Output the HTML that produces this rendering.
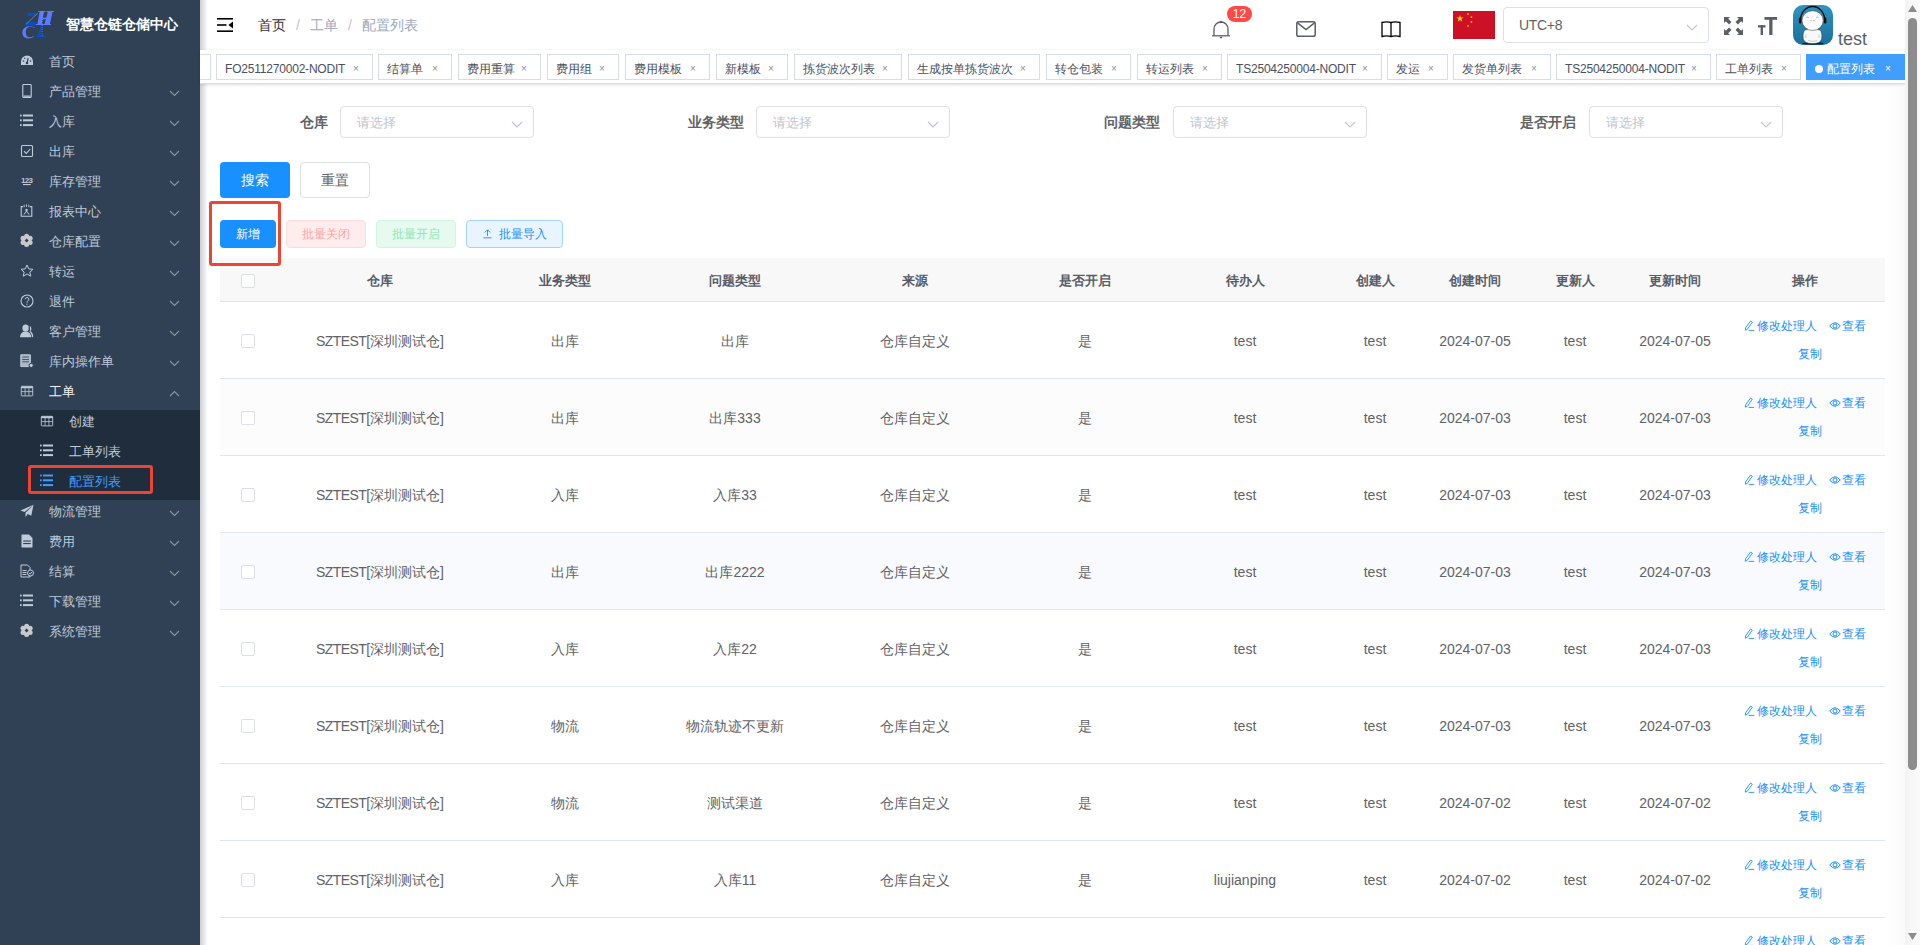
<!DOCTYPE html><html><head><meta charset="utf-8"><title>配置列表</title><style>
*{box-sizing:border-box;margin:0;padding:0}
html,body{width:1920px;height:945px;overflow:hidden;background:#fff}
body{position:relative;font-family:"Liberation Sans",sans-serif;color:#606266;font-size:14px}
.abs{position:absolute}
.sb{position:absolute;left:0;top:0;width:200px;height:945px;background:#304156}
.mi{position:absolute;left:0;width:200px;height:30px;color:#bfcbd9;font-size:13px;white-space:nowrap}
.mi .t{position:absolute;left:49px;top:0;line-height:24px}
.mi .ic{position:absolute;left:20px;top:4px;width:14px;height:14px}
.mi .ar{position:absolute;left:169px;top:10px;width:11px;height:7px}
.sub .t{left:69px}
.sub .ic{left:40px}
.tag{position:absolute;top:4px;height:26px;border:1px solid #d8dce5;background:#fff;color:#495060;font-size:12px;line-height:28px;padding-left:8px;white-space:nowrap}
.tag .x{position:absolute;top:0;font-size:10px;color:#8a8f99}
.lbl{position:absolute;top:106px;height:32px;line-height:32px;font-weight:bold;color:#606266;font-size:14px;text-align:right;white-space:nowrap}
.sel{position:absolute;top:106px;width:194px;height:32px;border:1px solid #dcdfe6;border-radius:4px;background:#fff}
.sel .ph{position:absolute;left:16px;top:0;line-height:32px;color:#c0c4cc;font-size:13px}
.sel svg{position:absolute;right:10px;top:14px}
.btn{position:absolute;border-radius:4px;text-align:center;white-space:nowrap}
.th{position:absolute;top:258px;height:44px;line-height:46px;font-weight:bold;color:#555c68;font-size:13px;text-align:center}
.td{position:absolute;height:77px;line-height:79px;color:#606266;font-size:14px;text-align:center;white-space:nowrap}
.cb{position:absolute;width:14px;height:14px;border:1px solid #dcdfe6;border-radius:2px;background:#fff}
.op{position:absolute;color:#1890ff;font-size:12px;white-space:nowrap}
</style></head><body>
<div class="sb">
<svg class="abs" style="left:0;top:0" width="60" height="45" viewBox="0 0 60 45">
<g fill="#5b7cff"><path d="M39.7 11.6h4.4l-2.4 12.9h-4.4z"/><path d="M47.9 11.6h4.7l-2.8 12.9h-5.3z"/><path d="M38.3 11h7.2v1.1h-7.2zM46.6 11h7.4v1.1h-7.4zM35.8 23.9h7.4v1.1h-7.4zM43.3 23.9h7.6v1.1h-7.6z"/><path d="M42.8 17.7h6.3l-.3 1.6h-6.3z"/>
<path d="M34.8 27.6C32 25.3 22.4 25 22.4 32.8C22.4 38.8 29 40 34.2 36.5L33.8 36C30 38.3 25.9 37.8 25.8 32.5C25.7 26.4 31 25.8 34.5 28.1z"/></g>
<g fill="#0a4fc0"><path d="M27.3 13.4C30 12.2 34.5 13.6 37.6 12.8L36.8 15.2C34 16.2 30.5 15.5 27.8 16.6z"/><path d="M25.6 22.4C28.5 21.6 32.5 22.6 35.5 21.7L35.7 24.9H25.6z"/>
<path d="M40.9 25h2.3l-2.9 11.2h-2.5z"/><path d="M35.8 35.8h9.2l1-2 -.3 3.2H35.7z"/></g>
<path d="M37.7 13.2L25.8 24.5" stroke="#7a9ad0" stroke-width=".7"/>
<path d="M42.2 11v26" stroke="#8aa0c8" stroke-width=".5" stroke-dasharray="1 1"/>
</svg>
<div class="abs" style="left:66px;top:15px;line-height:18px;font-size:14px;font-weight:bold;color:#fff;white-space:nowrap">智慧仓链仓储中心</div>
<div class="abs" style="left:0;top:410px;width:200px;height:90px;background:#1f2d3d"></div>
<div class="mi" style="top:50px"><svg class="ic" viewBox="0 0 14 14"><path d="M7 1.5A6 6 0 0 0 1 7.5v3.5h12V7.5A6 6 0 0 0 7 1.5z" fill="#bfcbd9"/><circle cx="7" cy="9" r="1.3" fill="#304156"/><path d="M7 9L8.2 4.2" stroke="#304156" stroke-width="1.2"/><circle cx="3.5" cy="7" r=".8" fill="#304156"/><circle cx="10.5" cy="7" r=".8" fill="#304156"/><circle cx="4.8" cy="4.3" r=".7" fill="#304156"/></svg><span class="t">首页</span>
</div>
<div class="mi" style="top:80px"><svg class="ic" viewBox="0 0 14 14"><rect x="2.8" y=".5" width="8.4" height="13" rx="1" fill="none" stroke="#bfcbd9" stroke-width="1.1"/><rect x="3.5" y="11.5" width="7" height="1.3" fill="#bfcbd9"/></svg><span class="t">产品管理</span>
<svg class="ar" viewBox="0 0 11 7"><path d="M1 1l4.5 4.5L10 1" fill="none" stroke="#909399" stroke-width="1.1"/></svg>
</div>
<div class="mi" style="top:110px"><svg class="ic" viewBox="0 0 14 14"><g fill="#bfcbd9"><rect x="0" y="0.6" width="1.7" height="1.8"/><rect x="3" y="0.5" width="10" height="2"/><rect x="0" y="5.4" width="1.7" height="1.8"/><rect x="3" y="5.3" width="10" height="2"/><rect x="0" y="10.2" width="1.7" height="1.8"/><rect x="3" y="10.1" width="10" height="2"/></g></svg><span class="t">入库</span>
<svg class="ar" viewBox="0 0 11 7"><path d="M1 1l4.5 4.5L10 1" fill="none" stroke="#909399" stroke-width="1.1"/></svg>
</div>
<div class="mi" style="top:140px"><svg class="ic" viewBox="0 0 14 14"><rect x="1.5" y="1.5" width="11" height="11" rx="1" fill="none" stroke="#bfcbd9" stroke-width="1.1"/><path d="M4 7.2l2.2 2.2L10.3 5" fill="none" stroke="#bfcbd9" stroke-width="1.1"/></svg><span class="t">出库</span>
<svg class="ar" viewBox="0 0 11 7"><path d="M1 1l4.5 4.5L10 1" fill="none" stroke="#909399" stroke-width="1.1"/></svg>
</div>
<div class="mi" style="top:170px"><svg class="ic" viewBox="0 0 14 14"><text x="6.7" y="8.6" text-anchor="middle" font-size="8" font-weight="bold" font-family="Liberation Sans" letter-spacing="-.6" fill="#bfcbd9">123</text><rect x="3" y="10" width="7.7" height="1.1" fill="#bfcbd9"/></svg><span class="t">库存管理</span>
<svg class="ar" viewBox="0 0 11 7"><path d="M1 1l4.5 4.5L10 1" fill="none" stroke="#909399" stroke-width="1.1"/></svg>
</div>
<div class="mi" style="top:200px"><svg class="ic" viewBox="0 0 14 14"><path d="M3.2 2.6H1.2v9.6h10.6V2.6h-2" fill="none" stroke="#bfcbd9" stroke-width="1.1"/><path d="M4.2 .6v2.6M6.5 .3v2.6M8.8 .6v2.6" stroke="#bfcbd9" stroke-width=".9"/><circle cx="6.5" cy="6" r="1.2" fill="#bfcbd9"/><path d="M3.9 10.6L6.5 7l2.6 3.6" fill="none" stroke="#bfcbd9" stroke-width="1"/></svg><span class="t">报表中心</span>
<svg class="ar" viewBox="0 0 11 7"><path d="M1 1l4.5 4.5L10 1" fill="none" stroke="#909399" stroke-width="1.1"/></svg>
</div>
<div class="mi" style="top:230px"><svg class="ic" style="overflow:visible" viewBox="0 0 14 14"><g fill="#c8c9cc"><circle cx="10.15" cy="8.45" r="2.5"/><circle cx="6.60" cy="10.50" r="2.5"/><circle cx="3.05" cy="8.45" r="2.5"/><circle cx="3.05" cy="4.35" r="2.5"/><circle cx="6.60" cy="2.30" r="2.5"/><circle cx="10.15" cy="4.35" r="2.5"/><circle cx="6.6" cy="6.4" r="4.4"/></g><path d="M6.6 4.4l2 2-2 2-2-2z" fill="#304156"/></svg><span class="t">仓库配置</span>
<svg class="ar" viewBox="0 0 11 7"><path d="M1 1l4.5 4.5L10 1" fill="none" stroke="#909399" stroke-width="1.1"/></svg>
</div>
<div class="mi" style="top:260px"><svg class="ic" viewBox="0 0 14 14"><path d="M7 1l1.8 3.9 4.2.4-3.2 2.8 1 4.1L7 10 3.2 12.2l1-4.1L1 5.3l4.2-.4z" fill="none" stroke="#bfcbd9" stroke-width="1"/></svg><span class="t">转运</span>
<svg class="ar" viewBox="0 0 11 7"><path d="M1 1l4.5 4.5L10 1" fill="none" stroke="#909399" stroke-width="1.1"/></svg>
</div>
<div class="mi" style="top:290px"><svg class="ic" viewBox="0 0 14 14"><circle cx="7" cy="7" r="6" fill="none" stroke="#bfcbd9" stroke-width="1.1"/><path d="M5.3 5.3a1.8 1.8 0 1 1 2.4 1.7c-.5.2-.7.5-.7 1v.6" fill="none" stroke="#bfcbd9" stroke-width="1"/><circle cx="7" cy="10.2" r=".6" fill="#bfcbd9"/></svg><span class="t">退件</span>
<svg class="ar" viewBox="0 0 11 7"><path d="M1 1l4.5 4.5L10 1" fill="none" stroke="#909399" stroke-width="1.1"/></svg>
</div>
<div class="mi" style="top:320px"><svg class="ic" viewBox="0 0 14 14"><path d="M9.6 1.8a3 3.3 0 0 1 .9 5.4c1.6.9 2.6 2.6 2.8 5.3l-1.3 1C11.7 10 10.6 8.4 9 7.6c1-1.3 1.3-3.7.6-5.8z" fill="#bfcbd9"/><ellipse cx="5.6" cy="4" rx="3.2" ry="3.5" fill="#bfcbd9"/><path d="M0 13.3C.2 9.6 2.4 7.6 5.6 7.6s5.4 2 5.6 5.7z" fill="#bfcbd9"/><path d="M9 3.6a3.6 3.9 0 0 1 -.2 4.8" fill="none" stroke="#304156" stroke-width=".8"/></svg><span class="t">客户管理</span>
<svg class="ar" viewBox="0 0 11 7"><path d="M1 1l4.5 4.5L10 1" fill="none" stroke="#909399" stroke-width="1.1"/></svg>
</div>
<div class="mi" style="top:350px"><svg class="ic" viewBox="0 0 14 14"><path d="M.8 .8h9.6v8.4M8.6 12.6H.8V.8" fill="none" stroke="#bfcbd9" stroke-width="1"/><rect x=".8" y=".8" width="9.6" height="11.8" fill="#bfcbd9" opacity=".85"/><g fill="#304156"><rect x="2.2" y="2.6" width="6.8" height=".8"/><rect x="2.2" y="5" width="6.8" height=".8"/><rect x="2.2" y="7.4" width="6.8" height=".8"/></g><circle cx="11.2" cy="11.4" r="2.1" fill="#bfcbd9" stroke="#304156" stroke-width="1"/></svg><span class="t">库内操作单</span>
<svg class="ar" viewBox="0 0 11 7"><path d="M1 1l4.5 4.5L10 1" fill="none" stroke="#909399" stroke-width="1.1"/></svg>
</div>
<div class="mi" style="top:380px"><svg class="ic" viewBox="0 0 14 14"><rect x="1.3" y="2.3" width="11.4" height="9.6" rx=".6" fill="none" stroke="#bfcbd9" stroke-width=".9"/><rect x="1.3" y="2.3" width="11.4" height="1.9" fill="#bfcbd9"/><path d="M1.3 7.6h11.4M5.1 4v7.8M8.9 4v7.8" stroke="#bfcbd9" stroke-width=".8"/></svg><span class="t" style="color:#f4f4f5">工单</span>
<svg class="ar" viewBox="0 0 11 7"><path d="M1 6L5.5 1.5 10 6" fill="none" stroke="#909399" stroke-width="1.1"/></svg>
</div>
<div class="mi sub" style="top:410px"><svg class="ic" viewBox="0 0 14 14"><rect x="1.3" y="2.3" width="11.4" height="9.6" rx=".6" fill="none" stroke="#bfcbd9" stroke-width=".9"/><rect x="1.3" y="2.3" width="11.4" height="1.9" fill="#bfcbd9"/><path d="M1.3 7.6h11.4M5.1 4v7.8M8.9 4v7.8" stroke="#bfcbd9" stroke-width=".8"/></svg><span class="t">创建</span>
</div>
<div class="mi sub" style="top:440px"><svg class="ic" viewBox="0 0 14 14"><g fill="#bfcbd9"><rect x="0" y="0.6" width="1.7" height="1.8"/><rect x="3" y="0.5" width="10" height="2"/><rect x="0" y="5.4" width="1.7" height="1.8"/><rect x="3" y="5.3" width="10" height="2"/><rect x="0" y="10.2" width="1.7" height="1.8"/><rect x="3" y="10.1" width="10" height="2"/></g></svg><span class="t">工单列表</span>
</div>
<div class="mi sub" style="top:470px"><svg class="ic" viewBox="0 0 14 14"><g fill="#409eff"><rect x="0" y="0.6" width="1.7" height="1.8"/><rect x="3" y="0.5" width="10" height="2"/><rect x="0" y="5.4" width="1.7" height="1.8"/><rect x="3" y="5.3" width="10" height="2"/><rect x="0" y="10.2" width="1.7" height="1.8"/><rect x="3" y="10.1" width="10" height="2"/></g></svg><span class="t" style="color:#409eff">配置列表</span>
</div>
<div class="mi" style="top:500px"><svg class="ic" viewBox="0 0 14 14"><path d="M13.5 .8L.5 6.5l4 1.5L13.5 .8 5.5 8.8v4.5l2.2-3.2 3.6 1.6z" fill="#bfcbd9"/></svg><span class="t">物流管理</span>
<svg class="ar" viewBox="0 0 11 7"><path d="M1 1l4.5 4.5L10 1" fill="none" stroke="#909399" stroke-width="1.1"/></svg>
</div>
<div class="mi" style="top:530px"><svg class="ic" viewBox="0 0 14 14"><path d="M1.5 .5h7.5l3.5 3.5v9.5h-11z" fill="#bfcbd9"/><g fill="#304156"><rect x="3.2" y="6.5" width="7.6" height="1.1"/><rect x="3.2" y="9" width="7.6" height="1.1"/></g></svg><span class="t">费用</span>
<svg class="ar" viewBox="0 0 11 7"><path d="M1 1l4.5 4.5L10 1" fill="none" stroke="#909399" stroke-width="1.1"/></svg>
</div>
<div class="mi" style="top:560px"><svg class="ic" viewBox="0 0 14 14"><path d="M1 1h6.5l2.5 2.5V6M10 11.5v1.5H1V1" fill="none" stroke="#bfcbd9" stroke-width="1"/><g fill="#bfcbd9"><rect x="2.5" y="6" width="4" height="1"/><rect x="2.5" y="8" width="4" height="1"/><rect x="2.5" y="10" width="4" height="1"/></g><circle cx="10.5" cy="9" r="3" fill="none" stroke="#bfcbd9" stroke-width="1"/><path d="M9 9l1.2 1.1L12 8" fill="none" stroke="#bfcbd9" stroke-width="1"/></svg><span class="t">结算</span>
<svg class="ar" viewBox="0 0 11 7"><path d="M1 1l4.5 4.5L10 1" fill="none" stroke="#909399" stroke-width="1.1"/></svg>
</div>
<div class="mi" style="top:590px"><svg class="ic" viewBox="0 0 14 14"><g fill="#bfcbd9"><rect x="0" y="0.6" width="1.7" height="1.8"/><rect x="3" y="0.5" width="10" height="2"/><rect x="0" y="5.4" width="1.7" height="1.8"/><rect x="3" y="5.3" width="10" height="2"/><rect x="0" y="10.2" width="1.7" height="1.8"/><rect x="3" y="10.1" width="10" height="2"/></g></svg><span class="t">下载管理</span>
<svg class="ar" viewBox="0 0 11 7"><path d="M1 1l4.5 4.5L10 1" fill="none" stroke="#909399" stroke-width="1.1"/></svg>
</div>
<div class="mi" style="top:620px"><svg class="ic" style="overflow:visible" viewBox="0 0 14 14"><g fill="#c8c9cc"><circle cx="10.15" cy="8.45" r="2.5"/><circle cx="6.60" cy="10.50" r="2.5"/><circle cx="3.05" cy="8.45" r="2.5"/><circle cx="3.05" cy="4.35" r="2.5"/><circle cx="6.60" cy="2.30" r="2.5"/><circle cx="10.15" cy="4.35" r="2.5"/><circle cx="6.6" cy="6.4" r="4.4"/></g><path d="M6.6 4.4l2 2-2 2-2-2z" fill="#304156"/></svg><span class="t">系统管理</span>
<svg class="ar" viewBox="0 0 11 7"><path d="M1 1l4.5 4.5L10 1" fill="none" stroke="#909399" stroke-width="1.1"/></svg>
</div>
<div class="abs" style="left:28px;top:465px;width:125px;height:29px;border:3px solid #ee4433;border-radius:3px"></div>
</div>
<div class="abs" style="left:200px;top:0;width:8px;height:945px;background:linear-gradient(to right,rgba(0,21,41,.2),rgba(0,21,41,0))"></div>
<svg class="abs" style="left:217px;top:18px" width="16" height="14" viewBox="0 0 16 14"><g fill="#000"><rect x="0" y="0" width="16" height="1.6"/><rect x="0" y="6.2" width="9.5" height="1.6"/><rect x="0" y="12.4" width="16" height="1.6"/><path d="M16 3.6v6.8L11.4 7z"/></g></svg>
<div class="abs" style="left:258px;top:15px;line-height:20px;font-size:14px;white-space:nowrap"><span style="color:#303133">首页</span><span style="color:#c0c4cc;margin:0 10px">/</span><span style="color:#97a8be">工单</span><span style="color:#c0c4cc;margin:0 10px">/</span><span style="color:#97a8be">配置列表</span></div>
<svg class="abs" style="left:1211px;top:20px" width="20" height="19" viewBox="0 0 20 19"><path d="M3 15.5V9a7 7 0 0 1 14 0v6.5" fill="none" stroke="#5a5e66" stroke-width="1.3"/><path d="M1 15.8h18" stroke="#5a5e66" stroke-width="1.3"/><circle cx="10" cy="2" r="1.2" fill="#5a5e66"/><path d="M8.8 17.5h2.4" stroke="#5a5e66" stroke-width="1.4"/></svg>
<div class="abs" style="left:1227px;top:6px;width:25px;height:16px;border-radius:8px;background:#ff4949;color:#fff;font-size:12px;line-height:16px;text-align:center">12</div>
<svg class="abs" style="left:1296px;top:21px" width="20" height="16" viewBox="0 0 20 16"><rect x=".8" y=".8" width="18.4" height="14.4" rx="1.8" fill="none" stroke="#5a5e66" stroke-width="1.5"/><path d="M1.5 1.8L10 8.5l8.5-6.7" fill="none" stroke="#5a5e66" stroke-width="1.5"/></svg>
<svg class="abs" style="left:1381px;top:21px" width="20" height="17" viewBox="0 0 20 17"><path d="M1 1.5Q5.5 .3 10 1.5Q14.5 .3 19 1.5V15.5Q14.5 14.3 10 15.5Q5.5 14.3 1 15.5z" fill="none" stroke="#000" stroke-width="1.3"/><path d="M10 1.5v14" stroke="#000" stroke-width="1.3"/></svg>
<svg class="abs" style="left:1453px;top:11px" width="42" height="28" viewBox="0 0 42 28"><rect width="42" height="28" fill="#cc1126"/><g fill="#ffd400"><path d="M7.00,3.80 L7.85,6.43 L10.61,6.43 L8.38,8.05 L9.23,10.67 L7.00,9.05 L4.77,10.67 L5.62,8.05 L3.39,6.43 L6.15,6.43z"/><path d="M15.31,1.76 L15.33,2.78 L16.30,3.08 L15.34,3.41 L15.35,4.43 L14.74,3.61 L13.78,3.94 L14.37,3.11 L13.76,2.29 L14.73,2.59z"/><path d="M19.50,5.23 L18.93,6.08 L19.57,6.87 L18.59,6.60 L18.02,7.45 L17.98,6.43 L17.00,6.16 L17.95,5.80 L17.91,4.79 L18.54,5.58z"/><path d="M18.40,9.60 L18.71,10.57 L19.73,10.57 L18.91,11.17 L19.22,12.13 L18.40,11.53 L17.58,12.13 L17.89,11.17 L17.07,10.57 L18.09,10.57z"/><path d="M15.41,13.66 L15.43,14.68 L16.40,14.98 L15.44,15.31 L15.45,16.33 L14.84,15.51 L13.88,15.84 L14.47,15.01 L13.86,14.19 L14.83,14.49z"/></g></svg>
<div class="abs" style="left:1503px;top:7px;width:206px;height:36px;border:1px solid #dcdfe6;border-radius:4px;background:#fff"><span class="abs" style="left:15px;top:0;line-height:35px;font-size:14px;color:#606266;letter-spacing:-.3px">UTC+8</span><svg class="abs" style="left:182px;top:16px" width="12" height="7" viewBox="0 0 12 7"><path d="M1 1l5 5 5-5" fill="none" stroke="#c0c4cc" stroke-width="1.2"/></svg></div>
<svg class="abs" style="left:1724px;top:17px" width="19" height="18" viewBox="0 0 19 18"><g fill="#5a5e66"><path d="M0 0h6L4.2 1.8 7.5 5.1 5.1 7.5 1.8 4.2 0 6z"/><path d="M19 0h-6l1.8 1.8-3.3 3.3 2.4 2.4 3.3-3.3L19 6z"/><path d="M0 18h6l-1.8-1.8 3.3-3.3-2.4-2.4-3.3 3.3L0 12z"/><path d="M19 18h-6l1.8-1.8-3.3-3.3 2.4-2.4 3.3 3.3 1.8-1.8z"/></g></svg>
<svg class="abs" style="left:1758px;top:17px" width="19" height="18" viewBox="0 0 19 18"><g fill="#5a5e66"><rect x="6.5" y="0" width="12.5" height="2.8"/><rect x="11.2" y="0" width="3.3" height="18"/><rect x="0" y="8.2" width="7.5" height="2.3"/><rect x="2.6" y="8.2" width="2.4" height="9.8"/></g></svg>
<svg class="abs" style="left:1793px;top:5px" width="40" height="40" viewBox="0 0 40 40"><defs><linearGradient id="ag" x1="0" y1="0" x2="0" y2="1"><stop offset="0" stop-color="#2e94c2"/><stop offset="1" stop-color="#1b6f9a"/></linearGradient></defs><rect width="40" height="40" rx="10" fill="url(#ag)"/><ellipse cx="20" cy="38.4" rx="11" ry="1.3" fill="#0b2533"/><path d="M11.2 25.5Q9.3 30.5 10.3 34Q11.5 38.6 19.5 38.6Q27.5 38.6 28.6 34Q29.6 30.5 27.8 25.5Q19.5 21.5 11.2 25.5z" fill="#f8f8f8" stroke="#3a3a3a" stroke-width=".5"/><path d="M12.8 29.5v3.5M26.2 29.5v3.5M15 35.5q4.5 2 9 0" stroke="#888" stroke-width=".4" fill="none"/><path d="M7.2 18C6.6 -4 32.6 -4 32 18" fill="none" stroke="#111" stroke-width="1.4"/><ellipse cx="19.6" cy="15.6" rx="10.6" ry="9.9" fill="#fbfbfb" stroke="#3a3a3a" stroke-width=".5"/><rect x="5.9" y="12.6" width="2.5" height="6" rx="1.1" fill="#111"/><rect x="30.9" y="12.6" width="2.5" height="6" rx="1.1" fill="#111"/><path d="M13.3 12.6q1.4-1.1 2.8 0M22.9 12.6q1.4-1.1 2.8 0M17.3 15.6h1.6M19.9 15.6h1.6" stroke="#777" stroke-width=".5" fill="none"/></svg>
<div class="abs" style="left:1838px;top:28px;font-size:18px;line-height:22px;color:#5a5e66">test</div>
<div class="abs" style="left:200px;top:50px;width:1705px;height:34px;background:#fff;border-bottom:1px solid #d8dce5;box-shadow:0 1px 3px 0 rgba(0,0,0,.12),0 0 3px 0 rgba(0,0,0,.04)"></div>
<div class="abs" style="left:200px;top:50px;width:1705px;height:34px;overflow:hidden"><div class="abs" style="left:-200px;top:0;width:1920px;height:34px">
<div class="tag" style="left:160px;width:51px"></div>
<div class="tag" style="left:216px;width:157px;letter-spacing:-.2px">FO2511270002-NODIT<span class="x" style="left:136px">×</span></div>
<div class="tag" style="left:378px;width:74px">结算单<span class="x" style="left:53px">×</span></div>
<div class="tag" style="left:458px;width:83px">费用重算<span class="x" style="left:62px">×</span></div>
<div class="tag" style="left:547px;width:72px">费用组<span class="x" style="left:51px">×</span></div>
<div class="tag" style="left:625px;width:85px">费用模板<span class="x" style="left:64px">×</span></div>
<div class="tag" style="left:716px;width:72px">新模板<span class="x" style="left:51px">×</span></div>
<div class="tag" style="left:794px;width:108px">拣货波次列表<span class="x" style="left:87px">×</span></div>
<div class="tag" style="left:908px;width:132px">生成按单拣货波次<span class="x" style="left:111px">×</span></div>
<div class="tag" style="left:1046px;width:85px">转仓包装<span class="x" style="left:64px">×</span></div>
<div class="tag" style="left:1137px;width:85px">转运列表<span class="x" style="left:64px">×</span></div>
<div class="tag" style="left:1227px;width:155px;letter-spacing:-.2px">TS2504250004-NODIT<span class="x" style="left:134px">×</span></div>
<div class="tag" style="left:1387px;width:61px">发运<span class="x" style="left:40px">×</span></div>
<div class="tag" style="left:1453px;width:98px">发货单列表<span class="x" style="left:77px">×</span></div>
<div class="tag" style="left:1556px;width:155px;letter-spacing:-.2px">TS2504250004-NODIT<span class="x" style="left:134px">×</span></div>
<div class="tag" style="left:1716px;width:85px">工单列表<span class="x" style="left:64px">×</span></div>
<div class="tag" style="left:1806px;width:99px;background:#409eff;border-color:#409eff;color:#fff;padding-left:8px"><span style="display:inline-block;width:8px;height:8px;border-radius:50%;background:#fff;margin-right:4px;vertical-align:0"></span>配置列表<span class="x" style="left:78px;color:#fff">×</span></div>
</div></div>
<div class="lbl" style="left:208px;width:120px">仓库</div>
<div class="sel" style="left:340px"><span class="ph">请选择</span><svg width="12" height="7" viewBox="0 0 12 7"><path d="M1 1l5 5 5-5" fill="none" stroke="#c0c4cc" stroke-width="1.2"/></svg></div>
<div class="lbl" style="left:624px;width:120px">业务类型</div>
<div class="sel" style="left:756px"><span class="ph">请选择</span><svg width="12" height="7" viewBox="0 0 12 7"><path d="M1 1l5 5 5-5" fill="none" stroke="#c0c4cc" stroke-width="1.2"/></svg></div>
<div class="lbl" style="left:1040px;width:120px">问题类型</div>
<div class="sel" style="left:1173px"><span class="ph">请选择</span><svg width="12" height="7" viewBox="0 0 12 7"><path d="M1 1l5 5 5-5" fill="none" stroke="#c0c4cc" stroke-width="1.2"/></svg></div>
<div class="lbl" style="left:1456px;width:120px">是否开启</div>
<div class="sel" style="left:1589px"><span class="ph">请选择</span><svg width="12" height="7" viewBox="0 0 12 7"><path d="M1 1l5 5 5-5" fill="none" stroke="#c0c4cc" stroke-width="1.2"/></svg></div>
<div class="btn" style="left:220px;top:162px;width:70px;height:36px;background:#1890ff;color:#fff;line-height:36px;font-size:14px">搜索</div>
<div class="btn" style="left:300px;top:162px;width:70px;height:36px;border:1px solid #dcdfe6;background:#fff;color:#606266;line-height:34px;font-size:14px">重置</div>
<div class="btn" style="left:220px;top:220px;width:56px;height:28px;background:#1890ff;color:#fff;line-height:28px;font-size:12px">新增</div>
<div class="btn" style="left:286px;top:220px;width:80px;height:28px;background:#ffeded;border:1px solid #ffdbdb;color:#ffa4a4;line-height:26px;font-size:12px">批量关闭</div>
<div class="btn" style="left:376px;top:220px;width:80px;height:28px;background:#e7faf0;border:1px solid #d0f5e0;color:#89e7b3;line-height:26px;font-size:12px">批量开启</div>
<div class="btn" style="left:466px;top:220px;width:97px;height:28px;background:#e8f4ff;border:1px solid #a3d3ff;color:#1890ff;line-height:26px;font-size:12px"><svg style="vertical-align:-1px;margin-right:6px" width="11" height="11" viewBox="0 0 11 11"><path d="M5.5 8V2M2.8 4.5l2.7-2.7 2.7 2.7M1.5 9.8h8" fill="none" stroke="#1890ff" stroke-width=".9"/></svg>批量导入</div>
<div class="abs" style="left:220px;top:258px;width:1665px;height:44px;background:#f8f8f9;border-bottom:1px solid #dfe6ec"></div>
<div class="th" style="left:275px;width:210px">仓库</div>
<div class="th" style="left:485px;width:160px">业务类型</div>
<div class="th" style="left:645px;width:180px">问题类型</div>
<div class="th" style="left:825px;width:180px">来源</div>
<div class="th" style="left:1005px;width:160px">是否开启</div>
<div class="th" style="left:1165px;width:160px">待办人</div>
<div class="th" style="left:1325px;width:100px">创建人</div>
<div class="th" style="left:1425px;width:100px">创建时间</div>
<div class="th" style="left:1525px;width:100px">更新人</div>
<div class="th" style="left:1625px;width:100px">更新时间</div>
<div class="th" style="left:1725px;width:160px">操作</div>
<div class="cb" style="left:241px;top:274px"></div>
<div class="abs" style="left:220px;top:302px;width:1665px;height:77px;background:#fff;border-bottom:1px solid #dfe6ec"></div>
<div class="cb" style="left:241px;top:334px"></div>
<div class="td" style="left:275px;top:302px;width:210px"><span style="letter-spacing:-.6px">SZTEST</span>[深圳测试仓]</div>
<div class="td" style="left:485px;top:302px;width:160px">出库</div>
<div class="td" style="left:645px;top:302px;width:180px">出库</div>
<div class="td" style="left:825px;top:302px;width:180px">仓库自定义</div>
<div class="td" style="left:1005px;top:302px;width:160px">是</div>
<div class="td" style="left:1165px;top:302px;width:160px">test</div>
<div class="td" style="left:1325px;top:302px;width:100px">test</div>
<div class="td" style="left:1425px;top:302px;width:100px">2024-07-05</div>
<div class="td" style="left:1525px;top:302px;width:100px">test</div>
<div class="td" style="left:1625px;top:302px;width:100px">2024-07-05</div>
<div class="op" style="left:1744px;top:318px;line-height:16px"><svg style="vertical-align:-1px;margin-right:2px" width="11" height="11" viewBox="0 0 11 11"><path d="M1.3 10.2l.3-2.4L6.6 1l1.7 1.2-5 7.1z" fill="none" stroke="#1890ff" stroke-width=".9"/><path d="M4.6 10.4h5.6" stroke="#1890ff" stroke-width=".9"/></svg>修改处理人<span style="margin-left:12px"><svg style="vertical-align:-1px;margin-right:1px" width="12" height="10" viewBox="0 0 12 10"><path d="M.7 5Q6 -1.5 11.3 5Q6 11.5 .7 5z" fill="none" stroke="#1890ff" stroke-width="1"/><circle cx="6" cy="5" r="2" fill="none" stroke="#1890ff" stroke-width="1"/></svg>查看</span></div>
<div class="op" style="left:1798px;top:346px;line-height:16px">复制</div>
<div class="abs" style="left:220px;top:379px;width:1665px;height:77px;background:#fcfcfc;border-bottom:1px solid #dfe6ec"></div>
<div class="cb" style="left:241px;top:411px"></div>
<div class="td" style="left:275px;top:379px;width:210px"><span style="letter-spacing:-.6px">SZTEST</span>[深圳测试仓]</div>
<div class="td" style="left:485px;top:379px;width:160px">出库</div>
<div class="td" style="left:645px;top:379px;width:180px">出库333</div>
<div class="td" style="left:825px;top:379px;width:180px">仓库自定义</div>
<div class="td" style="left:1005px;top:379px;width:160px">是</div>
<div class="td" style="left:1165px;top:379px;width:160px">test</div>
<div class="td" style="left:1325px;top:379px;width:100px">test</div>
<div class="td" style="left:1425px;top:379px;width:100px">2024-07-03</div>
<div class="td" style="left:1525px;top:379px;width:100px">test</div>
<div class="td" style="left:1625px;top:379px;width:100px">2024-07-03</div>
<div class="op" style="left:1744px;top:395px;line-height:16px"><svg style="vertical-align:-1px;margin-right:2px" width="11" height="11" viewBox="0 0 11 11"><path d="M1.3 10.2l.3-2.4L6.6 1l1.7 1.2-5 7.1z" fill="none" stroke="#1890ff" stroke-width=".9"/><path d="M4.6 10.4h5.6" stroke="#1890ff" stroke-width=".9"/></svg>修改处理人<span style="margin-left:12px"><svg style="vertical-align:-1px;margin-right:1px" width="12" height="10" viewBox="0 0 12 10"><path d="M.7 5Q6 -1.5 11.3 5Q6 11.5 .7 5z" fill="none" stroke="#1890ff" stroke-width="1"/><circle cx="6" cy="5" r="2" fill="none" stroke="#1890ff" stroke-width="1"/></svg>查看</span></div>
<div class="op" style="left:1798px;top:423px;line-height:16px">复制</div>
<div class="abs" style="left:220px;top:456px;width:1665px;height:77px;background:#fff;border-bottom:1px solid #dfe6ec"></div>
<div class="cb" style="left:241px;top:488px"></div>
<div class="td" style="left:275px;top:456px;width:210px"><span style="letter-spacing:-.6px">SZTEST</span>[深圳测试仓]</div>
<div class="td" style="left:485px;top:456px;width:160px">入库</div>
<div class="td" style="left:645px;top:456px;width:180px">入库33</div>
<div class="td" style="left:825px;top:456px;width:180px">仓库自定义</div>
<div class="td" style="left:1005px;top:456px;width:160px">是</div>
<div class="td" style="left:1165px;top:456px;width:160px">test</div>
<div class="td" style="left:1325px;top:456px;width:100px">test</div>
<div class="td" style="left:1425px;top:456px;width:100px">2024-07-03</div>
<div class="td" style="left:1525px;top:456px;width:100px">test</div>
<div class="td" style="left:1625px;top:456px;width:100px">2024-07-03</div>
<div class="op" style="left:1744px;top:472px;line-height:16px"><svg style="vertical-align:-1px;margin-right:2px" width="11" height="11" viewBox="0 0 11 11"><path d="M1.3 10.2l.3-2.4L6.6 1l1.7 1.2-5 7.1z" fill="none" stroke="#1890ff" stroke-width=".9"/><path d="M4.6 10.4h5.6" stroke="#1890ff" stroke-width=".9"/></svg>修改处理人<span style="margin-left:12px"><svg style="vertical-align:-1px;margin-right:1px" width="12" height="10" viewBox="0 0 12 10"><path d="M.7 5Q6 -1.5 11.3 5Q6 11.5 .7 5z" fill="none" stroke="#1890ff" stroke-width="1"/><circle cx="6" cy="5" r="2" fill="none" stroke="#1890ff" stroke-width="1"/></svg>查看</span></div>
<div class="op" style="left:1798px;top:500px;line-height:16px">复制</div>
<div class="abs" style="left:220px;top:533px;width:1665px;height:77px;background:#f9fafd;border-bottom:1px solid #dfe6ec"></div>
<div class="cb" style="left:241px;top:565px"></div>
<div class="td" style="left:275px;top:533px;width:210px"><span style="letter-spacing:-.6px">SZTEST</span>[深圳测试仓]</div>
<div class="td" style="left:485px;top:533px;width:160px">出库</div>
<div class="td" style="left:645px;top:533px;width:180px">出库2222</div>
<div class="td" style="left:825px;top:533px;width:180px">仓库自定义</div>
<div class="td" style="left:1005px;top:533px;width:160px">是</div>
<div class="td" style="left:1165px;top:533px;width:160px">test</div>
<div class="td" style="left:1325px;top:533px;width:100px">test</div>
<div class="td" style="left:1425px;top:533px;width:100px">2024-07-03</div>
<div class="td" style="left:1525px;top:533px;width:100px">test</div>
<div class="td" style="left:1625px;top:533px;width:100px">2024-07-03</div>
<div class="op" style="left:1744px;top:549px;line-height:16px"><svg style="vertical-align:-1px;margin-right:2px" width="11" height="11" viewBox="0 0 11 11"><path d="M1.3 10.2l.3-2.4L6.6 1l1.7 1.2-5 7.1z" fill="none" stroke="#1890ff" stroke-width=".9"/><path d="M4.6 10.4h5.6" stroke="#1890ff" stroke-width=".9"/></svg>修改处理人<span style="margin-left:12px"><svg style="vertical-align:-1px;margin-right:1px" width="12" height="10" viewBox="0 0 12 10"><path d="M.7 5Q6 -1.5 11.3 5Q6 11.5 .7 5z" fill="none" stroke="#1890ff" stroke-width="1"/><circle cx="6" cy="5" r="2" fill="none" stroke="#1890ff" stroke-width="1"/></svg>查看</span></div>
<div class="op" style="left:1798px;top:577px;line-height:16px">复制</div>
<div class="abs" style="left:220px;top:610px;width:1665px;height:77px;background:#fff;border-bottom:1px solid #dfe6ec"></div>
<div class="cb" style="left:241px;top:642px"></div>
<div class="td" style="left:275px;top:610px;width:210px"><span style="letter-spacing:-.6px">SZTEST</span>[深圳测试仓]</div>
<div class="td" style="left:485px;top:610px;width:160px">入库</div>
<div class="td" style="left:645px;top:610px;width:180px">入库22</div>
<div class="td" style="left:825px;top:610px;width:180px">仓库自定义</div>
<div class="td" style="left:1005px;top:610px;width:160px">是</div>
<div class="td" style="left:1165px;top:610px;width:160px">test</div>
<div class="td" style="left:1325px;top:610px;width:100px">test</div>
<div class="td" style="left:1425px;top:610px;width:100px">2024-07-03</div>
<div class="td" style="left:1525px;top:610px;width:100px">test</div>
<div class="td" style="left:1625px;top:610px;width:100px">2024-07-03</div>
<div class="op" style="left:1744px;top:626px;line-height:16px"><svg style="vertical-align:-1px;margin-right:2px" width="11" height="11" viewBox="0 0 11 11"><path d="M1.3 10.2l.3-2.4L6.6 1l1.7 1.2-5 7.1z" fill="none" stroke="#1890ff" stroke-width=".9"/><path d="M4.6 10.4h5.6" stroke="#1890ff" stroke-width=".9"/></svg>修改处理人<span style="margin-left:12px"><svg style="vertical-align:-1px;margin-right:1px" width="12" height="10" viewBox="0 0 12 10"><path d="M.7 5Q6 -1.5 11.3 5Q6 11.5 .7 5z" fill="none" stroke="#1890ff" stroke-width="1"/><circle cx="6" cy="5" r="2" fill="none" stroke="#1890ff" stroke-width="1"/></svg>查看</span></div>
<div class="op" style="left:1798px;top:654px;line-height:16px">复制</div>
<div class="abs" style="left:220px;top:687px;width:1665px;height:77px;background:#fff;border-bottom:1px solid #dfe6ec"></div>
<div class="cb" style="left:241px;top:719px"></div>
<div class="td" style="left:275px;top:687px;width:210px"><span style="letter-spacing:-.6px">SZTEST</span>[深圳测试仓]</div>
<div class="td" style="left:485px;top:687px;width:160px">物流</div>
<div class="td" style="left:645px;top:687px;width:180px">物流轨迹不更新</div>
<div class="td" style="left:825px;top:687px;width:180px">仓库自定义</div>
<div class="td" style="left:1005px;top:687px;width:160px">是</div>
<div class="td" style="left:1165px;top:687px;width:160px">test</div>
<div class="td" style="left:1325px;top:687px;width:100px">test</div>
<div class="td" style="left:1425px;top:687px;width:100px">2024-07-03</div>
<div class="td" style="left:1525px;top:687px;width:100px">test</div>
<div class="td" style="left:1625px;top:687px;width:100px">2024-07-03</div>
<div class="op" style="left:1744px;top:703px;line-height:16px"><svg style="vertical-align:-1px;margin-right:2px" width="11" height="11" viewBox="0 0 11 11"><path d="M1.3 10.2l.3-2.4L6.6 1l1.7 1.2-5 7.1z" fill="none" stroke="#1890ff" stroke-width=".9"/><path d="M4.6 10.4h5.6" stroke="#1890ff" stroke-width=".9"/></svg>修改处理人<span style="margin-left:12px"><svg style="vertical-align:-1px;margin-right:1px" width="12" height="10" viewBox="0 0 12 10"><path d="M.7 5Q6 -1.5 11.3 5Q6 11.5 .7 5z" fill="none" stroke="#1890ff" stroke-width="1"/><circle cx="6" cy="5" r="2" fill="none" stroke="#1890ff" stroke-width="1"/></svg>查看</span></div>
<div class="op" style="left:1798px;top:731px;line-height:16px">复制</div>
<div class="abs" style="left:220px;top:764px;width:1665px;height:77px;background:#fff;border-bottom:1px solid #dfe6ec"></div>
<div class="cb" style="left:241px;top:796px"></div>
<div class="td" style="left:275px;top:764px;width:210px"><span style="letter-spacing:-.6px">SZTEST</span>[深圳测试仓]</div>
<div class="td" style="left:485px;top:764px;width:160px">物流</div>
<div class="td" style="left:645px;top:764px;width:180px">测试渠道</div>
<div class="td" style="left:825px;top:764px;width:180px">仓库自定义</div>
<div class="td" style="left:1005px;top:764px;width:160px">是</div>
<div class="td" style="left:1165px;top:764px;width:160px">test</div>
<div class="td" style="left:1325px;top:764px;width:100px">test</div>
<div class="td" style="left:1425px;top:764px;width:100px">2024-07-02</div>
<div class="td" style="left:1525px;top:764px;width:100px">test</div>
<div class="td" style="left:1625px;top:764px;width:100px">2024-07-02</div>
<div class="op" style="left:1744px;top:780px;line-height:16px"><svg style="vertical-align:-1px;margin-right:2px" width="11" height="11" viewBox="0 0 11 11"><path d="M1.3 10.2l.3-2.4L6.6 1l1.7 1.2-5 7.1z" fill="none" stroke="#1890ff" stroke-width=".9"/><path d="M4.6 10.4h5.6" stroke="#1890ff" stroke-width=".9"/></svg>修改处理人<span style="margin-left:12px"><svg style="vertical-align:-1px;margin-right:1px" width="12" height="10" viewBox="0 0 12 10"><path d="M.7 5Q6 -1.5 11.3 5Q6 11.5 .7 5z" fill="none" stroke="#1890ff" stroke-width="1"/><circle cx="6" cy="5" r="2" fill="none" stroke="#1890ff" stroke-width="1"/></svg>查看</span></div>
<div class="op" style="left:1798px;top:808px;line-height:16px">复制</div>
<div class="abs" style="left:220px;top:841px;width:1665px;height:77px;background:#fff;border-bottom:1px solid #dfe6ec"></div>
<div class="cb" style="left:241px;top:873px"></div>
<div class="td" style="left:275px;top:841px;width:210px"><span style="letter-spacing:-.6px">SZTEST</span>[深圳测试仓]</div>
<div class="td" style="left:485px;top:841px;width:160px">入库</div>
<div class="td" style="left:645px;top:841px;width:180px">入库11</div>
<div class="td" style="left:825px;top:841px;width:180px">仓库自定义</div>
<div class="td" style="left:1005px;top:841px;width:160px">是</div>
<div class="td" style="left:1165px;top:841px;width:160px">liujianping</div>
<div class="td" style="left:1325px;top:841px;width:100px">test</div>
<div class="td" style="left:1425px;top:841px;width:100px">2024-07-02</div>
<div class="td" style="left:1525px;top:841px;width:100px">test</div>
<div class="td" style="left:1625px;top:841px;width:100px">2024-07-02</div>
<div class="op" style="left:1744px;top:857px;line-height:16px"><svg style="vertical-align:-1px;margin-right:2px" width="11" height="11" viewBox="0 0 11 11"><path d="M1.3 10.2l.3-2.4L6.6 1l1.7 1.2-5 7.1z" fill="none" stroke="#1890ff" stroke-width=".9"/><path d="M4.6 10.4h5.6" stroke="#1890ff" stroke-width=".9"/></svg>修改处理人<span style="margin-left:12px"><svg style="vertical-align:-1px;margin-right:1px" width="12" height="10" viewBox="0 0 12 10"><path d="M.7 5Q6 -1.5 11.3 5Q6 11.5 .7 5z" fill="none" stroke="#1890ff" stroke-width="1"/><circle cx="6" cy="5" r="2" fill="none" stroke="#1890ff" stroke-width="1"/></svg>查看</span></div>
<div class="op" style="left:1798px;top:885px;line-height:16px">复制</div>
<div class="abs" style="left:220px;top:918px;width:1665px;height:77px;background:#fff;border-bottom:1px solid #dfe6ec"></div>
<div class="op" style="left:1744px;top:933px;line-height:16px"><svg style="vertical-align:-1px;margin-right:2px" width="11" height="11" viewBox="0 0 11 11"><path d="M1.3 10.2l.3-2.4L6.6 1l1.7 1.2-5 7.1z" fill="none" stroke="#1890ff" stroke-width=".9"/><path d="M4.6 10.4h5.6" stroke="#1890ff" stroke-width=".9"/></svg>修改处理人<span style="margin-left:12px"><svg style="vertical-align:-1px;margin-right:1px" width="12" height="10" viewBox="0 0 12 10"><path d="M.7 5Q6 -1.5 11.3 5Q6 11.5 .7 5z" fill="none" stroke="#1890ff" stroke-width="1"/><circle cx="6" cy="5" r="2" fill="none" stroke="#1890ff" stroke-width="1"/></svg>查看</span></div>
<div class="abs" style="left:209px;top:201px;width:72px;height:65px;border:3px solid #ee4433;border-radius:3px"></div>
<div class="abs" style="left:1885px;top:84px;width:20px;height:861px;background:linear-gradient(to right,rgba(240,240,240,0),rgba(240,240,240,.35))"></div>
<div class="abs" style="left:1905px;top:0;width:15px;height:945px;background:linear-gradient(to right,#f2f2f2,#f8f8f8 50%,#fafafa)"></div>
<svg class="abs" style="left:1908px;top:5px" width="9" height="7" viewBox="0 0 9 7"><path d="M4.5 0L9 7H0z" fill="#8c8c8c"/></svg>
<div class="abs" style="left:1908px;top:18px;width:9px;height:752px;border-radius:5px;background:#8c8c8c"></div>
<svg class="abs" style="left:1908px;top:933px" width="9" height="7" viewBox="0 0 9 7"><path d="M0 0h9L4.5 7z" fill="#8c8c8c"/></svg>
</body></html>
